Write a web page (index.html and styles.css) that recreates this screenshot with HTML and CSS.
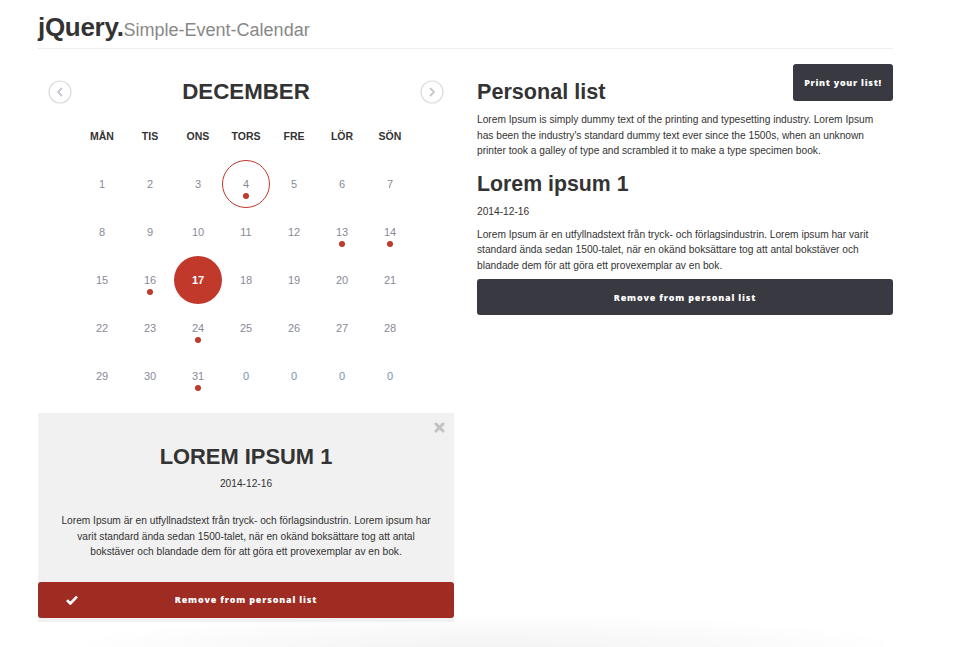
FILE: index.html
```html
<!DOCTYPE html>
<html lang="sv">

<head>
  <meta charset="UTF-8">
  <title>jQuery Simple Event Calendar</title>

  <link rel="stylesheet" href="styles.css">
</head>

<body>
  <div class="container">
    <header class="page-header">
      <h1>jQuery.<small>Simple-Event-Calendar</small></h1>
    </header>

    <div class="row">
      <!-- kalender -->
      <div class="col">
        <div class="calendar">
          <div class="cal-head">
            <button class="nav-btn" aria-label="Föregående">
              <svg width="24" height="24" viewBox="0 0 24 24"><circle cx="12" cy="12" r="11" fill="none" stroke="#dcdcdc" stroke-width="1.2"/><polyline points="13.5,8.5 10,12 13.5,15.5" fill="none" stroke="#c4c9d0" stroke-width="1.8" stroke-linecap="round" stroke-linejoin="round"/></svg>
            </button>
            <h2>DECEMBER</h2>
            <button class="nav-btn" aria-label="Nästa">
              <svg width="24" height="24" viewBox="0 0 24 24"><circle cx="12" cy="12" r="11" fill="none" stroke="#dcdcdc" stroke-width="1.2"/><polyline points="10.5,8.5 14,12 10.5,15.5" fill="none" stroke="#c4c9d0" stroke-width="1.8" stroke-linecap="round" stroke-linejoin="round"/></svg>
            </button>
          </div>

          <div class="cal-grid" id="cal-grid">
            <div class="day-name">MÅN</div>
            <div class="day-name">TIS</div>
            <div class="day-name">ONS</div>
            <div class="day-name">TORS</div>
            <div class="day-name">FRE</div>
            <div class="day-name">LÖR</div>
            <div class="day-name">SÖN</div>

            <div class="day">1</div>
            <div class="day">2</div>
            <div class="day">3</div>
            <div class="day selected event">4</div>
            <div class="day">5</div>
            <div class="day">6</div>
            <div class="day">7</div>

            <div class="day">8</div>
            <div class="day">9</div>
            <div class="day">10</div>
            <div class="day">11</div>
            <div class="day">12</div>
            <div class="day event">13</div>
            <div class="day event">14</div>

            <div class="day">15</div>
            <div class="day event">16</div>
            <div class="day today">17</div>
            <div class="day">18</div>
            <div class="day">19</div>
            <div class="day">20</div>
            <div class="day">21</div>

            <div class="day">22</div>
            <div class="day">23</div>
            <div class="day event">24</div>
            <div class="day">25</div>
            <div class="day">26</div>
            <div class="day">27</div>
            <div class="day">28</div>

            <div class="day">29</div>
            <div class="day">30</div>
            <div class="day event">31</div>
            <div class="day empty">0</div>
            <div class="day empty">0</div>
            <div class="day empty">0</div>
            <div class="day empty">0</div>
          </div>
        </div>

        <div class="event-panel">
          <span class="close-btn">
            <svg width="11" height="11" viewBox="0 0 11 11"><path d="M2 2 L9 9 M9 2 L2 9" stroke="#c2c2c2" stroke-width="3" stroke-linecap="round"/></svg>
          </span>
          <div class="event-body">
            <h3>LOREM IPSUM 1</h3>
            <p class="date">2014-12-16</p>
            <p>Lorem Ipsum är en utfyllnadstext från tryck- och förlagsindustrin. Lorem ipsum har varit standard ända sedan 1500-talet, när en okänd boksättare tog att antal bokstäver och blandade dem för att göra ett provexemplar av en bok.</p>
          </div>
          <button class="btn btn-red">
            <svg class="check" width="12" height="10" viewBox="0 0 12 10"><path d="M1 5.2 L4.3 8.5 L11 1.6" fill="none" stroke="#fff" stroke-width="2.6" stroke-linejoin="round"/></svg>
            Remove from personal list
          </button>
        </div>
      </div>

      <!-- personlig lista -->
      <div class="col col-list">
        <div class="list-head">
          <h2>Personal list</h2>
          <button class="btn btn-dark btn-print">Print your list!</button>
        </div>
        <p class="intro">Lorem Ipsum is simply dummy text of the printing and typesetting industry. Lorem Ipsum has been the industry's standard dummy text ever since the 1500s, when an unknown printer took a galley of type and scrambled it to make a type specimen book.</p>

        <h2 class="item-title">Lorem ipsum 1</h2>
        <p class="date">2014-12-16</p>
        <p class="item-text">Lorem Ipsum är en utfyllnadstext från tryck- och förlagsindustrin. Lorem ipsum har varit standard ända sedan 1500-talet, när en okänd boksättare tog att antal bokstäver och blandade dem för att göra ett provexemplar av en bok.</p>
        <button class="btn btn-dark btn-wide">Remove from personal list</button>
      </div>
    </div>
  </div>

  <div class="page-shadow"></div>
</body>

</html>
```

FILE: styles.css
```css
body {
  font-family: "Liberation Sans", Arial, sans-serif;
  background: #fff;
  color: #333;
  margin: 0;
  padding: 0;
  overflow: hidden;
}

.container {
  width: 855px;
  margin: 0 0 0 38px;
}

.page-header {
  padding: 12px 0 6px;
  border-bottom: 1px solid #eee;
}

.page-header h1 {
  margin: 0;
  height: 30px;
  font-size: 26px;
  line-height: 30px;
  font-weight: bold;
  color: #333;
  letter-spacing: -0.3px;
}

.page-header small {
  font-size: 18px;
  line-height: 1;
  font-weight: normal;
  color: #888;
  letter-spacing: 0;
}

.row {
  display: flex;
  gap: 23px;
}

.col {
  width: 416px;
}

/* kalender */
.calendar {
  margin-top: 23px;
}

.cal-head {
  display: flex;
  align-items: center;
  justify-content: space-between;
  height: 40px;
  padding: 0 10px;
}

.cal-head h2 {
  margin: 0;
  font-size: 22.3px;
  font-weight: bold;
  color: #333;
}

.nav-btn {
  width: 24px;
  height: 24px;
  padding: 0;
  border: none;
  background: none;
  cursor: pointer;
}

.nav-btn svg {
  display: block;
}

.cal-grid {
  display: grid;
  grid-template-columns: repeat(7, 48px);
  grid-auto-rows: 48px;
  justify-content: center;
}

.day-name {
  display: flex;
  align-items: center;
  justify-content: center;
  font-size: 10.5px;
  font-weight: bold;
  color: #333;
}

.day {
  position: relative;
  display: flex;
  align-items: center;
  justify-content: center;
  font-size: 11px;
  color: #858b95;
  border-radius: 50%;
}

.day.empty {
  color: #6f8fb8;
}

.day.selected {
  border: 1px solid #c0392b;
  box-sizing: border-box;
}

.day.today {
  background: #c0392b;
  color: #fff;
  font-weight: bold;
}

.day.event::after {
  content: "";
  position: absolute;
  left: 21px;
  top: 33px;
  width: 6px;
  height: 6px;
  border-radius: 50%;
  background: #c0392b;
}

.day.selected.event::after {
  left: 20px;
  top: 32px;
}

/* event-panel */
.event-panel {
  position: relative;
  margin-top: 13px;
  background: #f1f1f1;
  padding-bottom: 4px;
}

.close-btn {
  position: absolute;
  top: 9px;
  right: 9px;
  line-height: 0;
}

.event-body {
  padding: 31px 20px 22px;
  text-align: center;
}

.event-body h3 {
  margin: 0;
  font-size: 21.9px;
  line-height: 26px;
  font-weight: bold;
  color: #333;
}

.event-body .date {
  margin: 6px 0 0;
}

.event-body p {
  margin: 22px 0 0;
}

p {
  font-size: 10.2px;
  line-height: 15.5px;
  color: #333;
}

.date {
  font-size: 10.2px;
  line-height: 15px;
}

/* knappar */
.btn {
  display: flex;
  align-items: center;
  justify-content: center;
  border: none;
  border-radius: 3px;
  color: #fff;
  font-family: "Open Sans", sans-serif;
  font-weight: 800;
  font-size: 9px;
  letter-spacing: 0.8px;
  cursor: pointer;
}

.btn-red {
  position: relative;
  width: 100%;
  height: 36px;
  background: #9e2c23;
}

.btn-red .check {
  position: absolute;
  left: 28px;
  top: 13px;
}

.btn-dark {
  background: #393941;
}

.btn-print {
  width: 100px;
  height: 37px;
  letter-spacing: 0.7px;
}

.btn-wide {
  width: 100%;
  height: 36px;
  margin-top: 6px;
}

/* personlig lista */
.col-list {
  padding-top: 15px;
}

.list-head {
  display: flex;
  justify-content: space-between;
  align-items: flex-start;
}

.list-head h2 {
  margin: 15px 0 0;
  font-size: 21.6px;
  line-height: 26px;
  font-weight: bold;
  color: #333;
}

.intro {
  margin: 7px 0 0;
  padding-right: 12px;
}

.item-title {
  margin: 12px 0 0;
  font-size: 21.3px;
  line-height: 26px;
  font-weight: bold;
  color: #333;
}

.col-list .date {
  margin: 7px 0 0;
}

.item-text {
  margin: 8px 0 0;
}

.page-shadow {
  width: 800px;
  height: 40px;
  margin: -10px 0 0 85px;
  background: radial-gradient(ellipse 55% 100% at 50% 100%, rgba(0, 0, 0, 0.05), rgba(0, 0, 0, 0) 100%);
}
```
